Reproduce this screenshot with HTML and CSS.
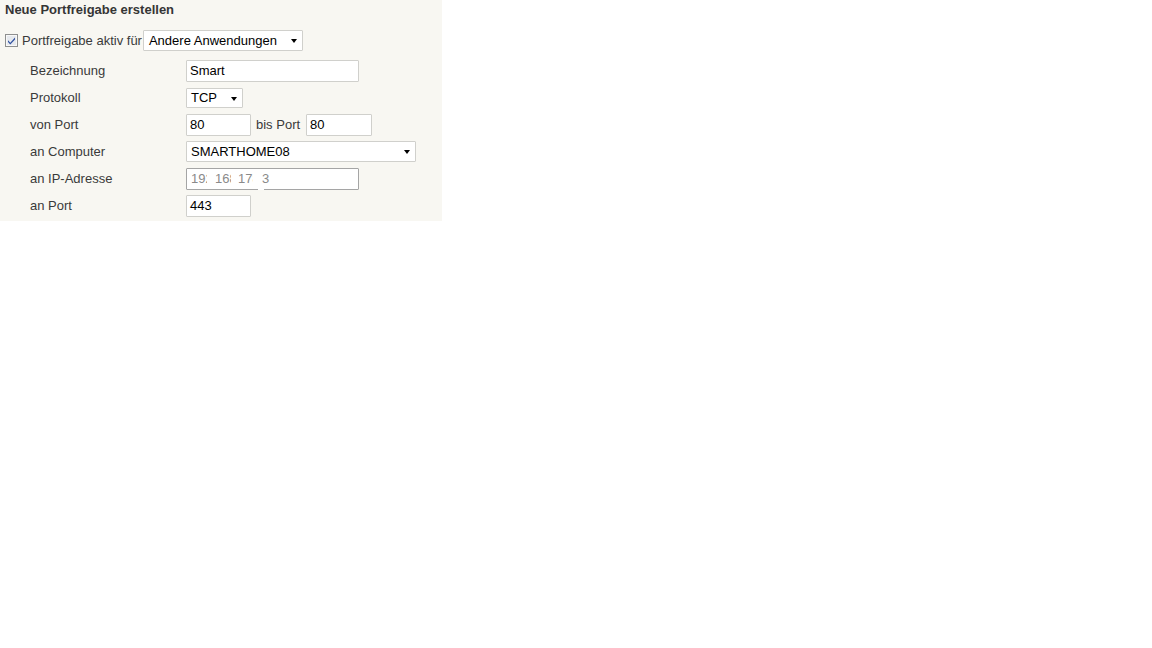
FILE: index.html
```html
<!DOCTYPE html>
<html lang="de">
<head>
  <meta charset="UTF-8" />
  <title>Neue Portfreigabe erstellen</title>
  <link rel="stylesheet" href="styles.css">
</head>
<body>

  <div class="panel">
    <h3 class="title">Neue Portfreigabe erstellen</h3>

    <div class="active-row">
      <span class="check" aria-hidden="true">
        <svg width="13" height="13" viewBox="0 0 13 13">
          <rect x="0.5" y="0.5" width="12" height="12" fill="#f4f4f4" stroke="#8e8f8f"/>
          <rect x="1.5" y="1.5" width="10" height="10" fill="#e6e9ee" stroke="#f8f8f8"/>
          <path d="M3 6.3 L5.3 8.8 L10 3.6 L10 5.4 L5.3 10.5 L3 8 Z" fill="#2e4f9f"/>
        </svg>
      </span>
      <label class="active-label">Portfreigabe aktiv für</label>
      <span class="select w-app">Andere Anwendungen</span>
    </div>

    <div class="row">
      <label class="label">Bezeichnung</label>
      <span class="input w-name">Smart</span>
    </div>

    <div class="row">
      <label class="label">Protokoll</label>
      <span class="select w-proto">TCP</span>
    </div>

    <div class="row">
      <label class="label">von Port</label>
      <span class="input w-port">80</span>
      <span class="between">bis Port</span>
      <span class="input w-port2">80</span>
    </div>

    <div class="row">
      <label class="label">an Computer</label>
      <span class="select w-pc">SMARTHOME08</span>
    </div>

    <div class="row">
      <label class="label">an IP-Adresse</label>
      <span class="ip w-name">
        <span class="octet o1">192</span>
        <span class="octet o2">168</span>
        <span class="octet o3">178</span>
        <span class="octet o4">3</span>
      </span>
    </div>

    <div class="row">
      <label class="label">an Port</label>
      <span class="input w-port">443</span>
    </div>
  </div>

</body>
</html>
```

FILE: styles.css
```css
body {
  margin: 0;
  background: #fff;
  font-family: "Liberation Sans", Arial, sans-serif;
  font-size: 13px;
  color: #3a3a3a;
}

.panel {
  width: 442px;
  height: 221px;
  box-sizing: border-box;
  padding: 2px 0 0 5px;
  background: #f8f7f2;
}

.title {
  margin: 0;
  font-size: 13px;
  line-height: 16px;
  font-weight: bold;
  color: #353535;
}

.active-row {
  display: flex;
  align-items: center;
  height: 22px;
  margin: 11px 0 6px;
}

.check {
  display: inline-flex;
  width: 13px;
  height: 13px;
  margin: 1px 4px 0 0;
}

.active-label {
  margin-right: 1px;
}

.row {
  display: flex;
  align-items: center;
  height: 27px;
}

.label {
  width: 156px;
  padding-left: 25px;
}

.input,
.select,
.ip {
  display: inline-flex;
  align-items: center;
  box-sizing: border-box;
  height: 22px;
  padding-left: 3px;
  background: #fff;
  border: 1px solid #d0d0cc;
  color: #000;
  border-radius: 1px;
}

.select {
  position: relative;
  height: 21px;
  padding-left: 4px;
}

.w-app { padding-left: 5px; }

.select::after {
  content: "";
  position: absolute;
  right: 5px;
  top: 8px;
  border-left: 3.5px solid transparent;
  border-right: 3.5px solid transparent;
  border-top: 4px solid #000;
}

.w-app { width: 160px; }
.w-name { width: 173px; }
.w-proto { width: 57px; height: 20px; }
.w-pc { width: 230px; height: 21px; }
.w-port { width: 65px; }
.w-port2 { width: 66px; }

.between {
  margin: 0 6px 0 5px;
}

.ip {
  border-color: #a5a5a5;
  padding-left: 3px;
  color: #8a8a8a;
  position: relative;
}

.octet {
  display: inline-block;
  overflow: hidden;
  white-space: nowrap;
  background: #fff;
}

.o1 { width: 16px; margin-left: 1px; }
.o2 { width: 16px; margin-left: 8px; }
.o3 { width: 15px; margin-left: 7px; }
.o4 {
  width: 40px;
  margin-left: 9px;
}

.ip::after {
  content: "";
  position: absolute;
  left: 71px;
  bottom: -1px;
  width: 6px;
  height: 1px;
  background: #fff;
}
```
